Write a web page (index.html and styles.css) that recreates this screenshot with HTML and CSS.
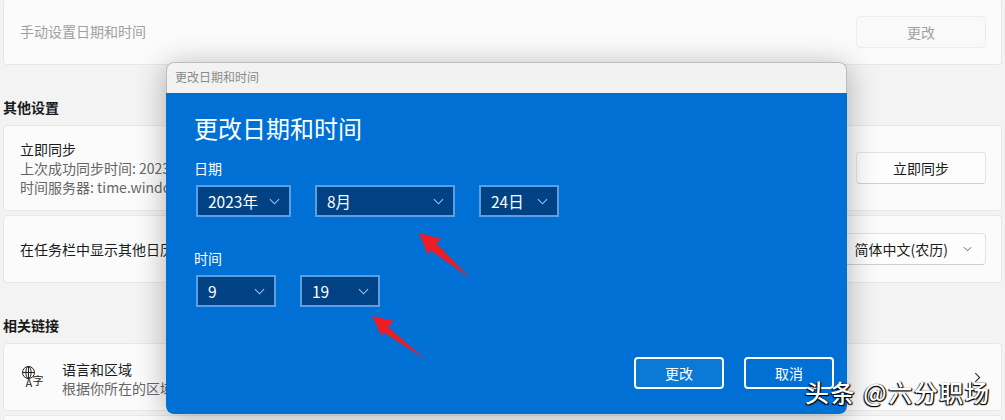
FILE: index.html
```html
<!DOCTYPE html>
<html lang="zh-CN">
<head>
  <meta charset="UTF-8">
  <title>更改日期和时间</title>
  <link rel="stylesheet" href="styles.css">
</head>
<body>
  <div class="page">
    <div class="card card-manual">
      <span class="muted-text">手动设置日期和时间</span>
      <button class="btn btn-disabled">更改</button>
    </div>

    <h2 class="section-title">其他设置</h2>
    <div class="card card-sync">
      <div>
        <div class="row-title">立即同步</div>
        <div class="row-sub">上次成功同步时间: 2023</div>
        <div class="row-sub">时间服务器: time.windo</div>
      </div>
      <button class="btn">立即同步</button>
    </div>
    <div class="card card-calendar">
      <span class="row-title">在任务栏中显示其他日历</span>
      <div class="btn btn-select">简体中文(农历)
        <svg class="chev-small" viewBox="0 0 10 6"><path d="M1 1l4 4 4-4" fill="none" stroke="#555" stroke-width="1"/></svg>
      </div>
    </div>

    <h2 class="section-title">相关链接</h2>
    <div class="card card-link">
      <svg class="lang-icon" viewBox="0 -3 28 28">
        <g fill="none" stroke="#222" stroke-width="1">
          <circle cx="6.500" cy="6.500" r="6"/>
          <ellipse cx="6.500" cy="6.500" rx="2.600" ry="6"/>
          <path d="M.5 6.500h12M6.500 .5v12"/>
        </g>
        <text class="lang-glyphs" x="3.500" y="21">A</text>
        <text class="lang-glyphs" x="10.500" y="19">字</text>
      </svg>
      <div class="link-text">
        <div class="link-title">语言和区域</div>
        <div class="row-sub">根据你所在的区域设</div>
      </div>
      <svg class="chev-right" viewBox="0 0 6 10"><path d="M1 1l4 4-4 4" fill="none" stroke="#333" stroke-width="1"/></svg>
    </div>
    <div class="card card-next"></div>
  </div>

  <div class="dialog">
    <div class="dialog-bar">更改日期和时间</div>
    <div class="dialog-body">
      <h1 class="dialog-title">更改日期和时间</h1>
      <div class="field-label">日期</div>
      <div class="picks">
        <div class="pick pick-year">2023年<svg viewBox="0 0 12 7"><path d="M1 1l5 5 5-5"/></svg></div>
        <div class="pick pick-month">8月<svg viewBox="0 0 12 7"><path d="M1 1l5 5 5-5"/></svg></div>
        <div class="pick pick-short">24日<svg viewBox="0 0 12 7"><path d="M1 1l5 5 5-5"/></svg></div>
      </div>
      <div class="field-label field-time">时间</div>
      <div class="picks">
        <div class="pick pick-short">9<svg viewBox="0 0 12 7"><path d="M1 1l5 5 5-5"/></svg></div>
        <div class="pick pick-short">19<svg viewBox="0 0 12 7"><path d="M1 1l5 5 5-5"/></svg></div>
      </div>
      <div class="dialog-actions">
        <button class="dlg-btn dlg-btn-main">更改</button>
        <button class="dlg-btn">取消</button>
      </div>
    </div>
  </div>

  <svg class="arrows" viewBox="0 0 1005 420">
    <path d="M419 233L442 239L436 243L470 278L430 250L428 255Z" fill="#ee1c25"/>
    <path d="M372 316L394 321L388 327L425 359L383 332L382 337Z" fill="#ee1c25"/>
  </svg>

  <div class="watermark">头条 @六分职场</div>
</body>
</html>
```

FILE: styles.css
```css
* { box-sizing: border-box; }
html, body { margin: 0; height: 100%; overflow: hidden; }
body { width: 1005px; height: 420px; background: #f3f3f3; font-family: "Noto Sans CJK SC", "Liberation Sans", sans-serif; position: relative; }

.page { padding: 0 3px; display: flex; flex-direction: column; }
.card { background: #fbfbfb; border: 1px solid #e7e7e7; border-radius: 4px; padding: 0 15px 0 16px; display: flex; align-items: center; justify-content: space-between; }
.card-manual { height: 66px; margin-top: -1px; border-top: none; }
.card-sync { height: 86px; margin-bottom: 4px; }
.card-calendar { height: 68px; }
.card-link { height: 68px; margin-bottom: 4px; justify-content: flex-start; padding-right: 20px; }
.card-next { height: 5px; border-bottom: none; border-radius: 4px 4px 0 0; }

.section-title { margin: 34px 0 8px; height: 18px; line-height: 17px; font-size: 14px; font-weight: 600; color: #1a1a1a; }

.muted-text { font-size: 14px; color: #a0a0a0; margin-top: -1px; }
.row-title { font-size: 14px; line-height: 19px; color: #1b1b1b; }
.row-sub { font-size: 14px; line-height: 19px; color: #666; white-space: nowrap; }

.btn { width: 130px; height: 32px; background: #fdfdfd; border: 1px solid #e3e3e3; border-bottom-color: #cfcfcf; border-radius: 4px; font: inherit; font-size: 14px; color: #1b1b1b; }
.btn-disabled { background: #f9f9f9; border-color: #ececec; color: #a2a2a2; }
.btn-select { display: flex; align-items: center; justify-content: flex-end; gap: 15px; padding: 0 13px 0 0; width: 146px; white-space: nowrap; }
.chev-small { width: 9px; height: 6px; }

.lang-icon { width: 28px; height: 28px; margin: 0 12px 0 2px; flex: none; }
.lang-glyphs { font-size: 11px; fill: #222; }
.link-text { flex: 1; margin-top: 3px; }
.link-title { font-size: 14px; line-height: 19px; color: #1b1b1b; }
.chev-right { width: 7px; height: 11px; }

/* dialog lies over the settings page */
.dialog { position: absolute; left: 166px; top: 62px; width: 681px; height: 352px; border-radius: 8px; box-shadow: 0 4px 30px rgba(0,0,0,0.3); }
.dialog-bar { height: 31px; background: #f2f2f2; border: 1px solid #bdbdbd; border-bottom: none; border-radius: 8px 8px 0 0; padding-left: 8px; font-size: 12px; line-height: 27px; color: #8a8a8a; }
.dialog-body { height: 321px; padding: 19px 13px 0 28px; display: flex; flex-direction: column; color: #fff; background: #0070d4; border-radius: 0 0 8px 8px; }
.dialog-title { margin: 0 0 14px; font-size: 24px; font-weight: 400; line-height: 32px; }
.field-label { font-size: 14px; line-height: 20px; margin-bottom: 7px; }
.field-time { margin-top: 31px; }

.picks { display: flex; gap: 24px; padding-left: 2px; }
.pick { height: 32px; display: flex; align-items: center; justify-content: space-between; padding: 0 9px 0 10px; background: #014284; border: 2px solid #5a9fe3; font-size: 15.5px; }
.pick svg { width: 11px; height: 7px; fill: none; stroke: #9fc3e8; stroke-width: 1.2; }
.pick-year { width: 95px; }
.pick-month { width: 140px; }
.pick-short { width: 80px; }

.dialog-actions { display: flex; justify-content: flex-end; gap: 20px; margin-top: auto; margin-bottom: 25px; }
.dlg-btn { width: 90px; height: 32px; background: transparent; border: 2px solid #fff; border-radius: 4px; color: #fff; font: inherit; font-size: 14px; }
.dlg-btn-main { background: #0a7ad6; }

.arrows { position: absolute; left: 0; top: 0; width: 1005px; height: 420px; pointer-events: none; }
.watermark { position: absolute; left: 805px; top: 375px; font-size: 24px; line-height: 34px; font-weight: 500; letter-spacing: 1.6px; color: #fff; white-space: nowrap; text-shadow: 1px 1px 1px #000, -1px 1px 1px #000, 1px 0 1px #222; }
```
